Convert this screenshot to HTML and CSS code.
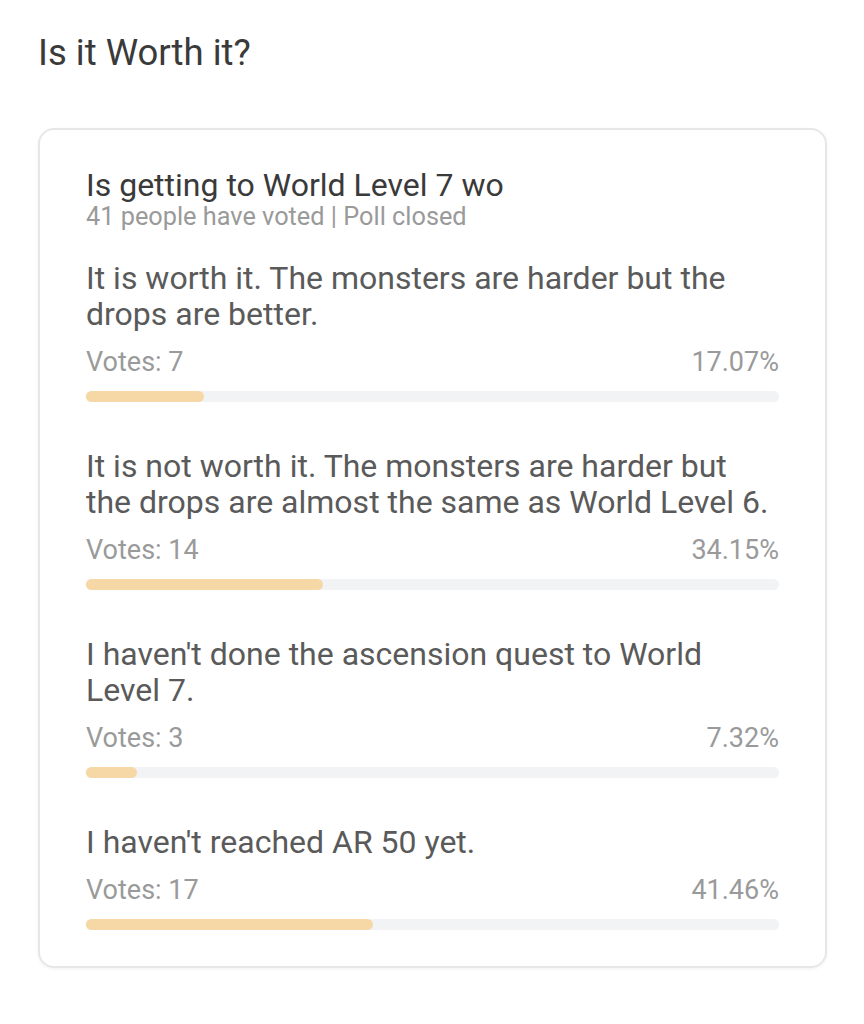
FILE: index.html
```html
<!DOCTYPE html>
<html lang="en">
<head>
  <meta charset="UTF-8" />
  <meta name="viewport" content="width=device-width, initial-scale=1.0" />
  <title>Is it Worth it?</title>
  <link rel="stylesheet" href="styles.css">
</head>
<body>
  <h1 class="page-title">Is it Worth it?</h1>

  <div class="poll-card">
    <div class="poll-question">Is getting to World Level 7 wo</div>
    <div class="poll-meta">41 people have voted | Poll closed</div>

    <div class="poll-option">
      <div class="option-text">It is worth it. The monsters are harder but the drops are better.</div>
      <div class="option-stats">
        <span>Votes: 7</span>
        <span>17.07%</span>
      </div>
      <div class="bar"><div class="bar-fill" style="width: 17.07%"></div></div>
    </div>

    <div class="poll-option">
      <div class="option-text">It is not worth it. The monsters are harder but the drops are almost the same as World Level 6.</div>
      <div class="option-stats">
        <span>Votes: 14</span>
        <span>34.15%</span>
      </div>
      <div class="bar"><div class="bar-fill" style="width: 34.15%"></div></div>
    </div>

    <div class="poll-option">
      <div class="option-text">I haven't done the ascension quest to World Level 7.</div>
      <div class="option-stats">
        <span>Votes: 3</span>
        <span>7.32%</span>
      </div>
      <div class="bar"><div class="bar-fill" style="width: 7.32%"></div></div>
    </div>

    <div class="poll-option">
      <div class="option-text">I haven't reached AR 50 yet.</div>
      <div class="option-stats">
        <span>Votes: 17</span>
        <span>41.46%</span>
      </div>
      <div class="bar"><div class="bar-fill" style="width: 41.46%"></div></div>
    </div>
  </div>
</body>
</html>
```

FILE: styles.css
```css
body {
  font-family: Roboto, "Liberation Sans", sans-serif;
  background-color: #fff;
  margin: 0;
  padding: 31px 37px 31px 38px;
  color: #3a3a3a;
}
.page-title {
  margin: 0;
  font-size: 36.5px;
  line-height: 44px;
  font-weight: 400;
  color: #3a3a3a;
}
.poll-card {
  margin-top: 53px;
  border: 2px solid #e5e8e7;
  border-radius: 16px;
  padding: 38px 46px 36px;
  box-shadow: 0 1px 3px rgba(0, 0, 0, 0.06);
}
.poll-question {
  font-size: 32px;
  line-height: 34px;
  color: #3a3a3a;
  white-space: nowrap;
}
.poll-meta {
  font-size: 25.3px;
  line-height: 30px;
  color: #9a9a9a;
}
.poll-option {
  margin-top: 28px;
}
.poll-option + .poll-option {
  margin-top: 46px;
}
.option-text {
  font-size: 32px;
  line-height: 36px;
  color: #5a5a5a;
}
.option-stats {
  display: flex;
  justify-content: space-between;
  margin-top: 15px;
  font-size: 27px;
  line-height: 30px;
  color: #9a9a9a;
}
.bar {
  margin-top: 14px;
  height: 11px;
  border-radius: 6px;
  background-color: #f2f3f5;
}
.bar-fill {
  height: 100%;
  border-radius: 6px;
  background-color: #f5d8a6;
}
```
